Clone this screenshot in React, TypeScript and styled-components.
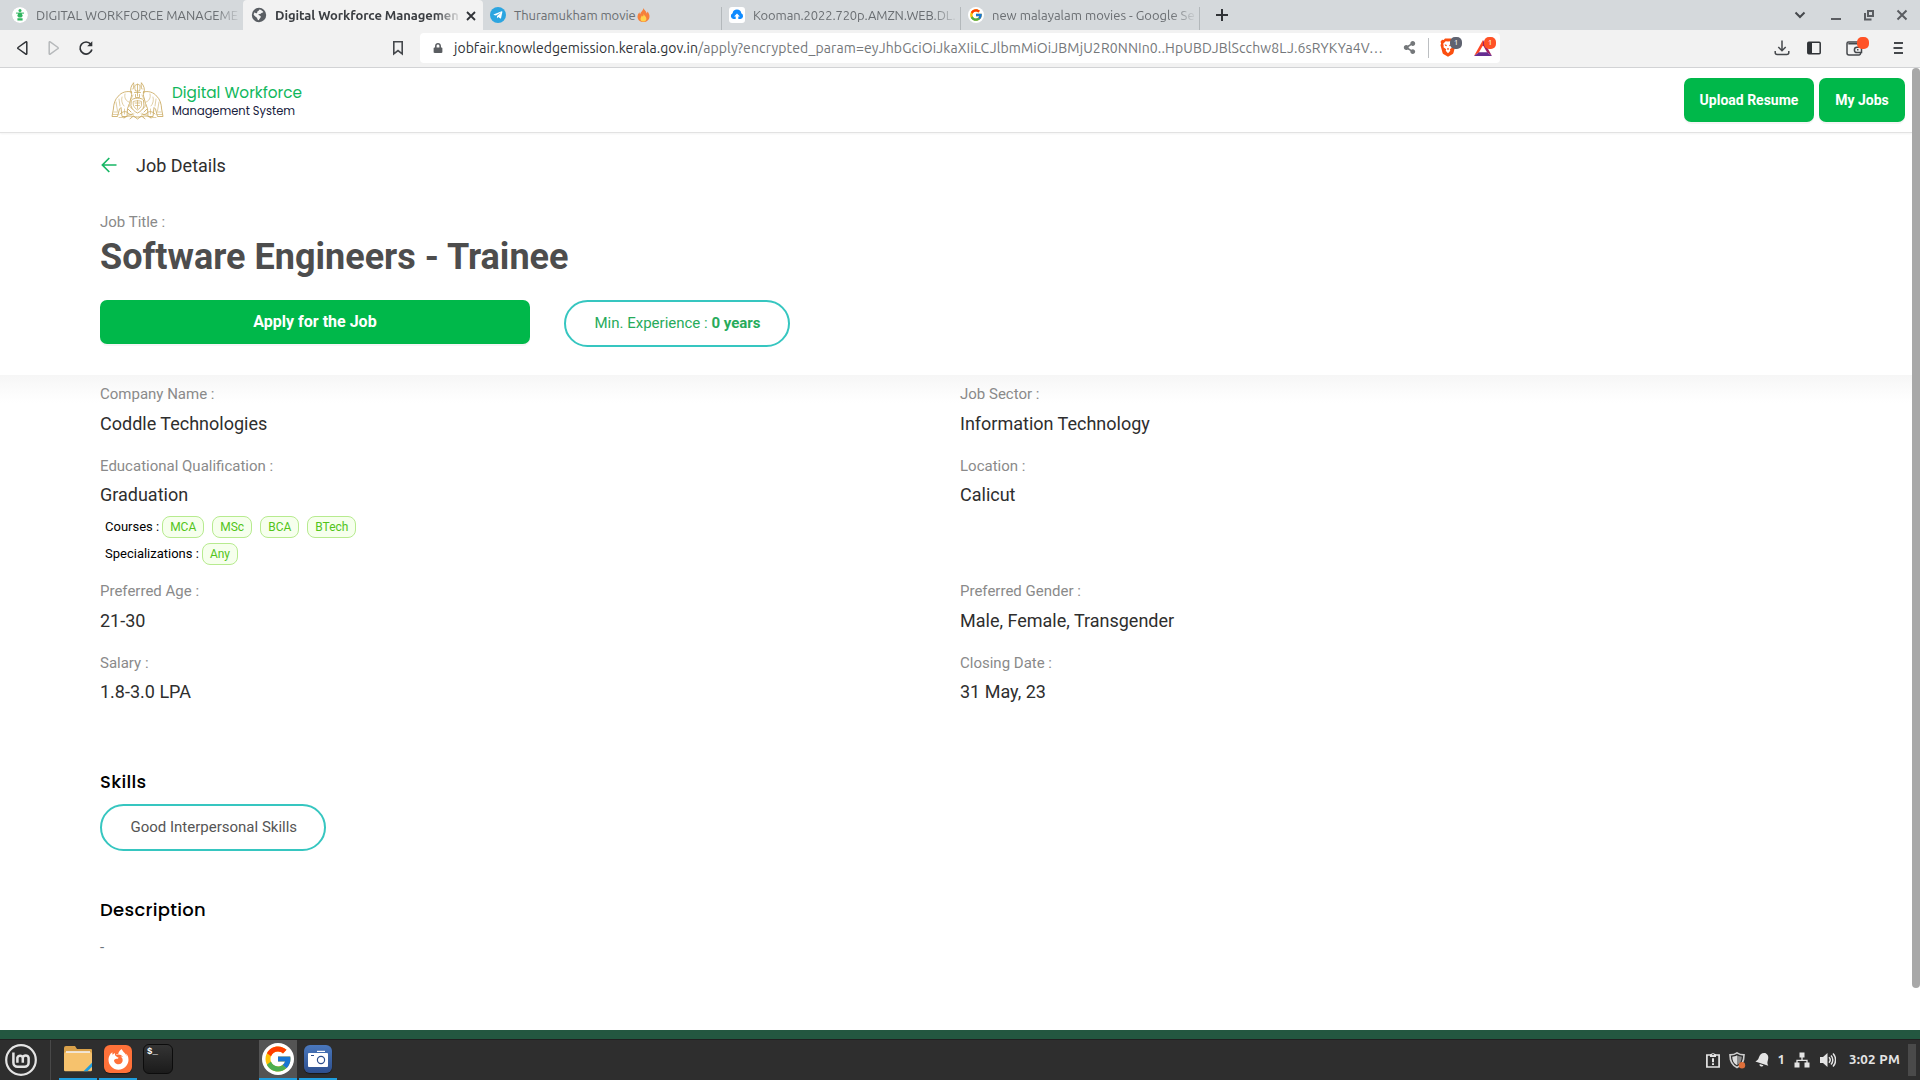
import React from "react";
import styled, { createGlobalStyle } from "styled-components";
import { FcGoogle } from "react-icons/fc";
import { FaFirefoxBrowser, FaTelegramPlane, FaLock, FaShareAlt } from "react-icons/fa";

const UI = `"Ubuntu", "Noto Sans", sans-serif`;
const BODY = `Roboto, "Liberation Sans", sans-serif`;
const HEAD = `"Poppins", Inter, sans-serif`;
const GREEN = "#00b84a";
const TEAL = "#36c6c0";

const GlobalStyle = createGlobalStyle`
  *, *::before, *::after { box-sizing: border-box; }
  html, body { margin: 0; padding: 0; }
  body { background: #fff; overflow: hidden; font-family: ${BODY}; }
  button { font: inherit; border: 0; margin: 0; padding: 0; }
  h1, h2, p, dl, dt, dd { margin: 0; font-weight: 400; }
  svg { display: block; flex: none; }
`;

const Screen = styled.div`
  width: 1920px;
  height: 1080px;
  display: flex;
  flex-direction: column;
  overflow: hidden;
`;

/* Browser tab strip */
const TabStrip = styled.div`
  height: 30px;
  flex: none;
  display: flex;
  background: #d5d9dc;
  font-family: ${UI};
  font-size: 13px;
  color: #6a6e72;
`;

const Tab = styled.div<{ $width: number; $active?: boolean; $divider?: boolean; $inset?: number }>`
  width: ${(p) => p.$width}px;
  padding-left: ${(p) => p.$inset ?? 7}px;
  display: flex;
  align-items: center;
  background-color: ${(p) => (p.$active ? "#f2f2f2" : "transparent")};
  border-radius: ${(p) => (p.$active ? "4px 4px 0 0" : "0")};
  color: ${(p) => (p.$active ? "#3b3e42" : "inherit")};
  font-weight: ${(p) => (p.$active ? 700 : 400)};
  background-image: ${(p) => (p.$divider ? "linear-gradient(#b3b8bb, #b3b8bb)" : "none")};
  background-repeat: no-repeat;
  background-size: 1px 23px;
  background-position: right 7px;
`;

const Favicon = styled.span<{ $bg?: string; $round?: boolean }>`
  width: 16px;
  height: 16px;
  flex: none;
  display: grid;
  place-items: center;
  overflow: hidden;
  color: #fff;
  background: ${(p) => p.$bg ?? "transparent"};
  border-radius: ${(p) => (p.$round ? "50%" : "3px")};
`;

const TabTitle = styled.span<{ $width: number; $track?: number; $fade?: boolean }>`
  width: ${(p) => p.$width}px;
  margin-left: 8px;
  display: flex;
  align-items: center;
  white-space: nowrap;
  line-height: 20px;
  letter-spacing: ${(p) => p.$track ?? 0}px;
  mask-image: ${(p) => (p.$fade ? "linear-gradient(90deg, #000 calc(100% - 24px), rgba(0,0,0,.1))" : "none")};
`;

const CloseTab = styled.span`
  margin-left: 7px;
  padding-top: 1px;
`;

const NewTab = styled.div`
  width: 44px;
  display: grid;
  place-items: center;
`;

const WindowControls = styled.div`
  margin-left: auto;
  padding-right: 12px;
  display: flex;
  align-items: center;
  gap: 21px;
`;

const TabSearch = styled.span`
  margin-right: 3px;
`;

/* Address bar */
const Toolbar = styled.div`
  height: 38px;
  flex: none;
  display: flex;
  align-items: center;
  padding-bottom: 1px;
  background: #f2f2f2;
  border-bottom: 1px solid #d2d3d5;
  color: #45484c;
`;

const NavButtons = styled.div`
  width: 420px;
  padding: 0 16px 0 14px;
  display: flex;
  align-items: center;
  gap: 16px;
`;

const BookmarkSlot = styled.span`
  margin-left: auto;
`;

const UrlBox = styled.div`
  width: 1080px;
  height: 30px;
  padding: 0 0 1px 13px;
  display: flex;
  align-items: center;
  background: #fff;
  border-radius: 4px;
  color: #6b6e72;
`;

const UrlText = styled.div`
  margin-left: 11px;
  width: 949px;
  flex: none;
  white-space: nowrap;
  font-family: ${UI};
  font-size: 14px;
  line-height: 20px;
  letter-spacing: 0.127px;
  color: #74777a;
`;

const UrlHost = styled.span`
  letter-spacing: 0.03px;
  color: #303337;
`;

const UrlDivider = styled.span`
  width: 1px;
  height: 20px;
  flex: none;
  margin: 0 11px 0 12px;
  background: #bcbfc2;
`;

const BadgedIcon = styled.span<{ $width: number }>`
  position: relative;
  width: ${(p) => p.$width}px;
  flex: none;
  height: 24px;
  display: flex;
  align-items: center;
`;

const CountBadge = styled.span<{ $bg: string }>`
  position: absolute;
  top: 1px;
  left: 10px;
  width: 12px;
  height: 12px;
  display: grid;
  place-items: center;
  border-radius: 5px;
  background: ${(p) => p.$bg};
  color: #fff;
  font-family: ${UI};
  font-size: 8px;
  line-height: 12px;
`;

const BrowserActions = styled.div`
  margin-left: auto;
  padding-right: 16px;
  display: flex;
  align-items: center;
`;

const Action = styled.span<{ $gap: number }>`
  position: relative;
  margin-left: ${(p) => p.$gap}px;
`;

const AlertDot = styled.span`
  position: absolute;
  top: -4px;
  left: 11px;
  width: 12px;
  height: 12px;
  border-radius: 5px;
  background: #ff5226;
`;

/* Page */
const Viewport = styled.div`
  height: 962px;
  flex: none;
  display: flex;
  background: #fff;
`;

const Page = styled.main`
  width: 1912px;
  display: flex;
  flex-direction: column;
`;

const ScrollTrack = styled.div`
  width: 8px;
`;

const ScrollThumb = styled.div`
  height: 920px;
  border-radius: 4px;
  background: #a8a8a8;
`;

const SiteHeader = styled.header`
  height: 65px;
  flex: none;
  padding: 0 7px 0 111px;
  display: flex;
  align-items: center;
  justify-content: space-between;
  border-bottom: 1px solid #e2e2e2;
  box-shadow: 0 1px 2px rgba(0, 0, 0, 0.05);
`;

const Brand = styled.div`
  padding-top: 2px;
  display: flex;
  align-items: center;
  gap: 8px;
`;

const BrandText = styled.div`
  font-family: ${HEAD};
`;

const BrandName = styled.div`
  font-size: 15.3px;
  line-height: 20px;
  color: #10b75c;
`;

const BrandSub = styled.div`
  font-size: 11.45px;
  line-height: 17px;
  color: #17213d;
`;

const HeaderActions = styled.div`
  display: flex;
  gap: 5px;
`;

const SolidButton = styled.button<{ $width: number; $size?: number }>`
  width: ${(p) => p.$width}px;
  height: 44px;
  border-radius: 7px;
  background: ${GREEN};
  color: #fff;
  font-weight: 700;
  font-size: ${(p) => p.$size ?? 14}px;
  line-height: 44px;
  box-shadow: 0 2px 0 rgba(0, 0, 0, 0.04);
`;

const Hero = styled.section`
  height: 242px;
  flex: none;
  padding: 19px 100px 0;
`;

const BackRow = styled.div`
  height: 28px;
  margin-bottom: 31px;
  padding-left: 1px;
  display: flex;
  align-items: flex-start;
  gap: 18px;
  font-size: 18px;
  line-height: 28px;
  color: #2e2e2e;
`;

const BackArrow = styled.span`
  padding-top: 5px;
`;

const FieldLabel = styled.dt`
  font-size: 15px;
  line-height: 22px;
  color: #8a8a8a;
`;

const JobTitleLabel = styled.p`
  font-size: 15px;
  line-height: 22px;
  color: #8a8a8a;
`;

const JobTitle = styled.h1`
  margin: 2px 0 21px;
  font-size: 36px;
  font-weight: 700;
  line-height: 44px;
  color: #4d4d4d;
`;

const HeroActions = styled.div`
  display: flex;
  align-items: flex-start;
  gap: 34px;
`;

const Pill = styled.span<{ $color: string }>`
  display: inline-block;
  height: 47px;
  width: 226px;
  padding-left: 28.5px;
  border: 2px solid ${TEAL};
  border-radius: 24px;
  font-size: 15px;
  line-height: 42px;
  white-space: nowrap;
  color: ${(p) => p.$color};
`;

const Details = styled.dl`
  flex: none;
  padding: 8px 0 0 100px;
  display: grid;
  grid-template-columns: 860px 1fr;
  grid-template-rows: 71.5px 125.5px 71.5px 71.5px;
  background: linear-gradient(#f6f6f6, #fafafa 12px, #fff 28px);
`;

const FieldValue = styled.dd`
  margin-top: 4.7px;
  font-size: 18px;
  line-height: 28px;
  color: #2e2e2e;
`;

const TagLines = styled.div`
  margin: 6.8px 0 0 5px;
  display: flex;
  flex-direction: column;
  gap: 5px;
`;

const TagLine = styled.div`
  height: 22px;
  display: flex;
  align-items: center;
  font-size: 13px;
  line-height: 22px;
  color: #000;
`;

const TagGroup = styled.div`
  margin-left: 3px;
  display: flex;
  gap: 8px;
`;

const Tag = styled.span`
  height: 22px;
  padding: 0 7px;
  border: 1px solid #b7eb8f;
  border-radius: 8px;
  background: #f6ffed;
  color: #52c41a;
  font-size: 12px;
  line-height: 20px;
`;

const Block = styled.section`
  padding: 44.5px 0 0 100px;
`;

const BlockTitle = styled.h2<{ $gap: number }>`
  margin-bottom: ${(p) => p.$gap}px;
  font-family: ${HEAD};
  font-size: 18px;
  font-weight: 500;
  line-height: 28px;
  letter-spacing: 0.3px;
  color: #000;
`;

const BlockText = styled.p`
  font-size: 15px;
  line-height: 22px;
  color: #6c757d;
`;

const Wallpaper = styled.div`
  height: 9px;
  flex: none;
  background: #235740;
`;

/* Desktop panel */
const Panel = styled.footer`
  height: 41px;
  flex: none;
  display: flex;
  background: #2e2e2e;
  border-top: 1px solid #1f1f1f;
  color: #e4e4e4;
`;

const MenuSlot = styled.div`
  width: 51px;
  height: 40px;
  padding: 4px 0 0 5px;
  border-right: 1px solid #484848;
`;

const LaunchItem = styled.div<{ $running?: boolean; $active?: boolean; $left?: number }>`
  width: 38px;
  height: 40px;
  margin-left: ${(p) => p.$left ?? 2}px;
  padding-top: ${(p) => (p.$active ? 3 : 5)}px;
  display: flex;
  justify-content: center;
  background: ${(p) => (p.$active ? "#545454" : "transparent")};
  border-bottom: 2px solid ${(p) => (p.$running ? "#1f9ede" : "transparent")};
`;

const AppTile = styled.span<{ $bg: string }>`
  width: 28px;
  height: 28px;
  display: grid;
  place-items: center;
  border-radius: 6px;
  background: ${(p) => p.$bg};
  color: #fff;
  box-shadow: 0 1px 1px rgba(0, 0, 0, 0.5);
`;

const TerminalTile = styled.span`
  width: 30px;
  height: 30px;
  margin-top: -1px;
  padding: 2px 0 0 3px;
  border: 1px solid #0c0c0c;
  border-radius: 6px;
  background: linear-gradient(#343434, #1b1b1b);
  font-family: "Liberation Mono", monospace;
  font-size: 9px;
  font-weight: 700;
  line-height: 10px;
  color: #fff;
`;

const GoogleDisc = styled.span`
  width: 32px;
  height: 32px;
  display: grid;
  place-items: center;
  border-radius: 50%;
  background: #fff;
`;

const Tray = styled.div`
  margin-left: auto;
  display: flex;
  align-items: center;
  font-family: ${UI};
`;

const TrayItem = styled.span<{ $gap: number }>`
  margin-left: ${(p) => p.$gap}px;
  font-size: 13.33px;
  font-weight: 700;
  line-height: 20px;
`;

const Clock = styled.span`
  width: 59px;
  margin-left: 13px;
  font-size: 13.33px;
  font-weight: 700;
  line-height: 20px;
  letter-spacing: 0.25px;
  white-space: nowrap;
`;

const ShowDesktop = styled.span`
  width: 8px;
  height: 32px;
  margin-right: 4px;
  background: #4a4a4a;
`;

const Seal = () => (
  <svg width="16" height="16" viewBox="0 0 16 16">
    <circle cx="8" cy="8" r="8" fill="#fff" />
    <g fill="#2fb65f">
      <circle cx="8" cy="3.4" r="1.5" />
      <path d="M4.2 5.4h1.6v1.4H4.2zM10.2 5.4h1.6v1.4h-1.6zM6.3 5.6h3.4l.6 2.5-.8 2.3h-3l-.8-2.3zM5.4 11.2h5.2v2.4H5.4z" />
    </g>
    <path d="M5 8.5l2 1.3M11 8.5L9 9.8" stroke="#2fb65f" strokeWidth=".8" />
  </svg>
);

const Globe = () => (
  <svg width="16" height="16" viewBox="0 0 16 16">
    <circle cx="8" cy="8" r="7.2" fill="#5a5e63" />
    <path d="M8.4 2.4c1.6.3 3.2 1.2 4 2.6-.7 1-1.8.6-2.5 1.4-.8.8-2.2.3-2.5 1.2-.2.8 1.2.7 2 1.3.8.7.4 1.9-.5 2.5-.9.5-.6 1.6-1.5 1.9-1-.3-.9-1.7-1.5-2.5C5.2 9.9 3.6 9 2.6 7.7c.2-1 .5-1.8 1-2.5.6.8 1.3 1.4 2.1 1 .9-.5.4-1.5 1.2-2.1.5-.4 1.3-.8 1.5-1.7z" fill="#f2f2f2" />
  </svg>
);

const Flame = () => (
  <svg width="15" height="16" viewBox="0 0 15 16">
    <path d="M7.3 1c.6 2 3.1 3 3.4 5.4.5-.5.7-1.2.6-2 1.400 1.400 2.400 3.200 2.200 5.300-.2 3.200-2.700 5.300-6 5.300s-5.800-2-6-5c-.1-2 .9-3.600 2-4.800 0 .9.2 1.5.8 2C4.400 4.700 7.500 3.800 7.300 1z" fill="#f5803c" />
    <path d="M7.600 7c.2 1.500 2.800 2.300 2.800 4.700 0 1.800-1.200 2.900-2.900 2.900s-3-1-3-2.700c0-1.500 1-2.300 1.300-3.500.6.3.9.7 1 1.300.7-.8.9-1.700.8-2.700z" fill="#ffd24d" />
  </svg>
);

const CloudIcon = () => (
  <svg width="16" height="16" viewBox="0 0 16 16">
    <path d="M4.500 12A3 3 0 0 1 3.600 6.300a4.400 4.400 0 0 1 8.700 0A3 3 0 0 1 11.500 12H9.300V9.500h1.600L8 6.400 5.100 9.500h1.600V12z" fill="#0f8bff" />
  </svg>
);

const BraveLion = () => (
  <svg width="16" height="19" viewBox="0 0 16 19">
    <path d="M5 .5h6l1.300 1.500 1.700-.2 1.500 2-.6 1.700.6 1.700-2 7.500c-.2.700-.6 1.200-1.200 1.600L8 18.800l-4.300-2.500c-.6-.4-1-.9-1.200-1.600l-2-7.500.6-1.700-.6-1.700 1.500-2 1.700.2z" fill="#fb4f10" />
    <path d="M8 3.600l2.300-.4 2.500 2.600-.5 2 .2 1.500-2.700 2 .5 1.500L8 15.200l-2.300-2.400.5-1.500-2.700-2 .2-1.500-.5-2 2.500-2.600z" fill="#fff" />
    <path d="M4.600 6.300l2.300.7-.4 1.200-1.300-.4zM11.400 6.300L9.100 7l.4 1.200 1.300-.4zM7 10.300h2l-.3 1.200L8 12l-.7-.5z" fill="#fb4f10" />
  </svg>
);

const BatIcon = () => (
  <svg width="18" height="16" viewBox="0 0 18 16">
    <path d="M9 0v5.200L5 12.300 0 16z" fill="#ff4724" />
    <path d="M9 0v5.200l4 7.100L18 16z" fill="#9e1f63" />
    <path d="M0 16h18l-5-3.700H5z" fill="#662d91" />
  </svg>
);

const Emblem = () => (
  <svg width="53" height="38" viewBox="0 0 53 38" fill="none" stroke="#cdae68" strokeWidth=".9" strokeLinecap="round" strokeLinejoin="round">
    <path d="M20.500 10C16 8.500 10 10.500 7.500 14 4 17 2.600 22 2.400 27L1 34.500h5.500L8.500 27l1.500-1.500 1 9h5l.5-8 2-5 1.500-6c.8-1.600.6-3.800.5-5.500z" />
    <path d="M32.500 10c4.500-1.500 10.500.5 13 4 3.500 3 4.900 8 5.100 13l1.400 7.500h-5.500L44.500 27 43 25.500l-1 9h-5l-.5-8-2-5-1.500-6c-.8-1.600-.6-3.800-.5-5.500z" />
    <path d="M20 11c-1-4 0-7.500 2.500-10M22.500 1c.8 2 .4 4-.5 6M33 11c1-4 0-7.500-2.500-10M30.500 1c-.8 2-.4 4 .5 6" />
    <path d="M14 12c-1 4 1 7 4 8M39 12c1 4-1 7-4 8M11 15c-1 3 0 7 2 9M42 15c1 3 0 7-2 9M5 20l1.500 9M48 20l-1.500 9M8 17l1 7M45 17l-1 7M13.500 27v5M39.500 27v5M3 30h4M46 30h4M2 32.500h5M46 32.500h5" strokeWidth=".6" />
    <path d="M24 3.500c1-1.500 4-1.500 5 0v3.500l-.5 2h-4L24 7zM23.500 10.500h6M24.500 12.500v3h4v-3M26.500 2v12" strokeWidth=".8" />
    <path d="M20.500 18c2-2.500 10-2.500 12 0l.5 6c-1 3.500-3.500 5.500-6.500 7-3-1.500-5.500-3.500-6.500-7z" />
    <path d="M22.500 19.500c2-1 6-1 8 0v4c-.8 2-2 3.200-4 4.500-2-1.300-3.200-2.500-4-4.500zM24 21h5M24.500 23.500h4M26.500 18.500v8" strokeWidth=".7" />
    <path d="M9 32c3-3 6-3 8-1s4 2 5 .5M44 32c-3-3-6-3-8-1s-4 2-5 .5M13 36c5-4 8-1 13.500-1s8.500-3 13.500 1M19 36.800l3.500-2.800 4 3 4-3 3.500 2.800M17 27l3 3M36 27l-3 3" />
    <path d="M17 33c2-2 4 1 6-1M36 33c-2-2-4 1-6-1M8 35.500h6M39 35.500h6M22 13l-2 4M31 13l2 4M18 23c1 2 2 3 3 4M35 23c-1 2-2 3-3 4" strokeWidth=".6" />
  </svg>
);

const MintLogo = () => (
  <svg width="32" height="32" viewBox="0 0 32 32" fill="none" stroke="#e4e4e4">
    <circle cx="16" cy="16" r="14.800" strokeWidth="2.200" />
    <path d="M8.400 8.500v10.200a4 4 0 0 0 4 4h7.200a4 4 0 0 0 4-4v-5a3 3 0 0 0-5.800 0v5M17.800 13.700a2.800 2.800 0 0 0-5.400 0v5" strokeWidth="2.500" />
  </svg>
);

const FolderIcon = () => (
  <svg width="28" height="28" viewBox="1 1 28 28">
    <path d="M1 4a2 2 0 0 1 2-2h9l2 3h14a1 1 0 0 1 1 1v5H1z" fill="#d9a14a" />
    <path d="M1 10a2 2 0 0 1 2-2h24a2 2 0 0 1 2 2v16a1.200 1.200 0 0 1-1.200 1.200H2.200A1.200 1.200 0 0 1 1 26z" fill="#f6c26d" />
    <path d="M3 7.200h24v1.600H3z" fill="#f3f0f2" />
    <path d="M20.500 27.200L29 18.700v4l-4.500 4.500z" fill="#1f9ede" />
  </svg>
);

const CameraIcon = () => (
  <svg width="22" height="18" viewBox="0 0 22 18">
    <path d="M10 .8h8v1.200h-8z" fill="#fff" />
    <rect x="1" y="3" width="20" height="14" rx="1" fill="#fff" />
    <path d="M4 5h3v1H4z" fill="#2d4f8e" />
    <circle cx="14" cy="10" r="3.600" fill="none" stroke="#2d4f8e" strokeWidth="1.200" />
  </svg>
);

const fields: { label: string; value: string; tags?: [string, string[]][] }[] = [
  { label: "Company Name :", value: "Coddle Technologies" },
  { label: "Job Sector :", value: "Information Technology" },
  {
    label: "Educational Qualification :",
    value: "Graduation",
    tags: [
      ["Courses :", ["MCA", "MSc", "BCA", "BTech"]],
      ["Specializations :", ["Any"]],
    ],
  },
  { label: "Location :", value: "Calicut" },
  { label: "Preferred Age :", value: "21-30" },
  { label: "Preferred Gender :", value: "Male, Female, Transgender" },
  { label: "Salary :", value: "1.8-3.0 LPA" },
  { label: "Closing Date :", value: "31 May, 23" },
];

const BrowserTabs = () => (
  <TabStrip>
    <Tab $width={243} $inset={12}>
      <Favicon $round><Seal /></Favicon>
      <TabTitle $width={203} $fade>DIGITAL WORKFORCE MANAGEME</TabTitle>
    </Tab>
    <Tab $width={240} $inset={8} $active>
      <Favicon><Globe /></Favicon>
      <TabTitle $width={184} $track={-0.08} $fade>Digital Workforce Managemen</TabTitle>
      <CloseTab>
        <svg width="10" height="10" viewBox="0 0 10 10" stroke="#303337" strokeWidth="1.800">
          <path d="M1 1l8 8M9 1L1 9" />
        </svg>
      </CloseTab>
    </Tab>
    <Tab $width={239} $divider>
      <Favicon $bg="#2ca5e0" $round><FaTelegramPlane size={10} /></Favicon>
      <TabTitle $width={200} $track={-0.06}>Thuramukham movie<Flame /></TabTitle>
    </Tab>
    <Tab $width={239} $divider>
      <Favicon $bg="#fff"><CloudIcon /></Favicon>
      <TabTitle $width={203} $track={-0.13} $fade>Kooman.2022.720p.AMZN.WEB.DL.</TabTitle>
    </Tab>
    <Tab $width={239} $divider>
      <Favicon $bg="#fff" $round><FcGoogle size={14} /></Favicon>
      <TabTitle $width={203} $fade>new malayalam movies - Google Se</TabTitle>
    </Tab>
    <NewTab>
      <svg width="12" height="12" viewBox="0 0 12 12" stroke="#303337" strokeWidth="2">
        <path d="M6 0v12M0 6h12" />
      </svg>
    </NewTab>
    <WindowControls>
      <TabSearch>
        <svg width="12" height="8" viewBox="0 0 12 8" fill="none" stroke="#45484c" strokeWidth="2">
          <path d="M1.500 1.500L6 6l4.500-4.500" />
        </svg>
      </TabSearch>
      <svg width="12" height="12" viewBox="0 0 12 12" fill="#5a5d61">
        <path d="M1 9h10v2H1z" />
      </svg>
      <svg width="12" height="12" viewBox="0 0 12 12" fill="none" stroke="#5a5d61" strokeWidth="2">
        <path d="M5 2h5v5H5zM2 4v6.500H8.500" />
      </svg>
      <svg width="12" height="12" viewBox="0 0 12 12" stroke="#5a5d61" strokeWidth="2">
        <path d="M1.500 1.500l9 9M10.500 1.500l-9 9" />
      </svg>
    </WindowControls>
  </TabStrip>
);

const AddressBar = () => (
  <Toolbar>
    <NavButtons>
      <svg width="16" height="16" viewBox="0 0 16 16" fill="none" stroke="#303337" strokeWidth="1.500" strokeLinejoin="round">
        <path d="M12.800 2.300v11.400a.6.6 0 0 1-1 .4L4 8.500a.6.6 0 0 1 0-1l7.800-5.600a.6.6 0 0 1 1 .4z" />
      </svg>
      <svg width="16" height="16" viewBox="0 0 16 16" fill="none" stroke="#b6b9bb" strokeWidth="1.500" strokeLinejoin="round">
        <path d="M3.200 2.300v11.400a.6.6 0 0 0 1 .4L12 8.500a.6.6 0 0 0 0-1L4.200 1.900a.6.6 0 0 0-1 .4z" />
      </svg>
      <svg width="16" height="16" viewBox="0 0 16 16" fill="none" stroke="#303337" strokeWidth="1.700">
        <path d="M12.800 4.300A6 6 0 1 0 13.900 9.500" />
        <path d="M14.300 1.300v5H9.200z" fill="#303337" stroke="none" />
      </svg>
      <BookmarkSlot>
        <svg width="12" height="16" viewBox="0 0 12 16" fill="none" stroke="#45484c" strokeWidth="1.600">
          <path d="M1.800 1.800h8.400v12L6 10.600l-4.200 3.200z" />
        </svg>
      </BookmarkSlot>
    </NavButtons>
    <UrlBox>
      <FaLock size={10} color="#5a5d61" />
      <UrlText>
        <UrlHost>jobfair.knowledgemission.kerala.gov.in</UrlHost>
        /apply?encrypted_param=eyJhbGciOiJkaXIiLCJlbmMiOiJBMjU2R0NNIn0..HpUBDJBlScchw8LJ.6sRYKYa4V…
      </UrlText>
      <FaShareAlt size={13} color="#74777a" />
      <UrlDivider />
      <BadgedIcon $width={34}>
        <BraveLion />
        <CountBadge $bg="#5f6370">1</CountBadge>
      </BadgedIcon>
      <BadgedIcon $width={24}>
        <BatIcon />
        <CountBadge $bg="#ff5226">1</CountBadge>
      </BadgedIcon>
    </UrlBox>
    <BrowserActions>
      <Action $gap={0}>
        <svg width="16" height="16" viewBox="0 0 16 16" fill="none" stroke="#45484c" strokeWidth="1.500">
          <path d="M8 .5v10M4.300 7L8 10.700 11.700 7M1.200 11v1.500a2 2 0 0 0 2 2h9.600a2 2 0 0 0 2-2V11" />
        </svg>
      </Action>
      <Action $gap={17}>
        <svg width="14" height="14" viewBox="0 0 14 14">
          <rect x=".8" y="1.300" width="12.400" height="11.400" rx="1" fill="none" stroke="#303337" strokeWidth="1.500" />
          <path d="M1 1h4v12H1z" fill="#303337" />
        </svg>
      </Action>
      <Action $gap={25}>
        <svg width="17" height="15" viewBox="0 0 17 15" fill="none" stroke="#45484c" strokeWidth="1.500">
          <path d="M14.500 5.500V4.300a1.500 1.500 0 0 0-1.500-1.500H2.300M14.500 12v.5a1.500 1.500 0 0 1-1.500 1.500H3a2 2 0 0 1-2-2V2.500A1.500 1.500 0 0 1 2.500 1H14" />
          <path d="M15.500 6.300H11a2 2 0 0 0 0 5.200h4.500z" />
          <path d="M11 8.800h1.500" />
        </svg>
        <AlertDot />
      </Action>
      <Action $gap={30}>
        <svg width="11" height="12" viewBox="0 0 11 12" stroke="#45484c" strokeWidth="1.800">
          <path d="M1 1h9M0.500 6h9M1 11h9" />
        </svg>
      </Action>
    </BrowserActions>
  </Toolbar>
);

const Taskbar = () => (
  <Panel>
    <MenuSlot><MintLogo /></MenuSlot>
    <LaunchItem $running $left={8}><FolderIcon /></LaunchItem>
    <LaunchItem $running>
      <AppTile $bg="#ff7139"><FaFirefoxBrowser size={21} /></AppTile>
    </LaunchItem>
    <LaunchItem><TerminalTile>$_</TerminalTile></LaunchItem>
    <LaunchItem $running $active $left={82}>
      <GoogleDisc><FcGoogle size={30} /></GoogleDisc>
    </LaunchItem>
    <LaunchItem $running>
      <AppTile $bg="linear-gradient(#4a78bd, #2d4f8e)"><CameraIcon /></AppTile>
    </LaunchItem>
    <Tray>
      <TrayItem $gap={0}>
        <svg width="14" height="16" viewBox="0 0 14 16">
          <path d="M.9 3h12.200v12H.9z" fill="none" stroke="#e4e4e4" strokeWidth="1.700" />
          <path d="M4 2.200h1.200a1.900 1.900 0 0 1 3.600 0H10V5H4zM6 6.300h2v4H6zM6 11.300h2v1.700H6z" fill="#e4e4e4" />
          <circle cx="7" cy="2.400" r=".8" fill="#2e2e2e" />
        </svg>
      </TrayItem>
      <TrayItem $gap={9}>
        <svg width="17" height="17" viewBox="0 0 17 17">
          <path d="M8 .9c2 1.500 4.300 2 7 2 0 6-1.500 10-7 12.600C2.500 12.900 1 8.900 1 2.900c2.700 0 5-.5 7-2z" fill="#2e2e2e" stroke="#cfcfcf" strokeWidth="1.600" />
          <path d="M8 3.200c1.500 1 3 1.400 4.800 1.500-.2 4.200-1.500 6.800-4.800 8.500z" fill="#8c8c8c" />
          <path d="M8 3.200C6.500 4.200 5 4.600 3.200 4.700 3.400 8.900 4.700 11.500 8 13.200z" fill="#dcdcdc" />
          <circle cx="13" cy="13.300" r="3.200" fill="#df6f3a" />
        </svg>
      </TrayItem>
      <TrayItem $gap={9}>
        <svg width="16" height="16" viewBox="0 0 16 16">
          <g transform="rotate(18 8 8)" fill="#e4e4e4">
            <path d="M8 .6c3.600.6 4.700 3.200 4.700 6.300 0 2.300.7 3.600 2.100 4.900H1.200c1.400-1.300 2.100-2.600 2.100-4.900 0-3.100 1.100-5.700 4.700-6.300z" />
            <path d="M6 12.800h4a2 2 0 0 1-4 0z" />
          </g>
        </svg>
      </TrayItem>
      <TrayItem $gap={6}>1</TrayItem>
      <TrayItem $gap={9}>
        <svg width="16" height="16" viewBox="0 0 16 16" fill="#e4e4e4">
          <path d="M5.500 0.500h5v5h-5zM.5 10.500h5v5h-5zM10.500 10.500h5v5h-5z" />
          <path d="M8 5v3.300M3 11V8.300h10V11" fill="none" stroke="#e4e4e4" strokeWidth="1.300" />
        </svg>
      </TrayItem>
      <TrayItem $gap={10}>
        <svg width="16" height="16" viewBox="0 0 16 16" fill="none" stroke="#e4e4e4" strokeWidth="1.500">
          <path d="M0 5h3l4.500-4v14L3 11H0z" fill="#e4e4e4" stroke="none" />
          <path d="M9 5.300a4 4 0 0 1 0 5.400M11 3.500a6.500 6.500 0 0 1 0 9M13 1.500a9.500 9.500 0 0 1 0 13" />
        </svg>
      </TrayItem>
      <Clock>3:02 PM</Clock>
      <ShowDesktop />
    </Tray>
  </Panel>
);

export default function App() {
  return (
    <Screen>
      <GlobalStyle />
      <BrowserTabs />
      <AddressBar />
      <Viewport>
        <Page>
          <SiteHeader>
            <Brand>
              <Emblem />
              <BrandText>
                <BrandName>Digital Workforce</BrandName>
                <BrandSub>Management System</BrandSub>
              </BrandText>
            </Brand>
            <HeaderActions>
              <SolidButton $width={130}>Upload Resume</SolidButton>
              <SolidButton $width={86}>My Jobs</SolidButton>
            </HeaderActions>
          </SiteHeader>
          <Hero>
            <BackRow>
              <BackArrow>
                <svg width="17" height="16" viewBox="0 0 17 16" fill="none" stroke="#17b765" strokeWidth="1.700">
                  <path d="M8.300 1L1.400 8l6.900 7M1.400 8H15.500" />
                </svg>
              </BackArrow>
              Job Details
            </BackRow>
            <JobTitleLabel>Job Title :</JobTitleLabel>
            <JobTitle>Software Engineers - Trainee</JobTitle>
            <HeroActions>
              <SolidButton $width={430} $size={16}>Apply for the Job</SolidButton>
              <Pill $color="#27ab5b">
                Min. Experience : <b>0 years</b>
              </Pill>
            </HeroActions>
          </Hero>
          <Details>
            {fields.map((f) => (
              <div key={f.label}>
                <FieldLabel>{f.label}</FieldLabel>
                <FieldValue>{f.value}</FieldValue>
                {f.tags && (
                  <TagLines>
                    {f.tags.map(([name, items]) => (
                      <TagLine key={name}>
                        {name}
                        <TagGroup>
                          {items.map((t) => (
                            <Tag key={t}>{t}</Tag>
                          ))}
                        </TagGroup>
                      </TagLine>
                    ))}
                  </TagLines>
                )}
              </div>
            ))}
          </Details>
          <Block>
            <BlockTitle $gap={8.5}>Skills</BlockTitle>
            <Pill $color="#555">Good Interpersonal Skills</Pill>
          </Block>
          <Block>
            <BlockTitle $gap={12}>Description</BlockTitle>
            <BlockText>-</BlockText>
          </Block>
        </Page>
        <ScrollTrack>
          <ScrollThumb />
        </ScrollTrack>
      </Viewport>
      <Wallpaper />
      <Taskbar />
    </Screen>
  );
}
